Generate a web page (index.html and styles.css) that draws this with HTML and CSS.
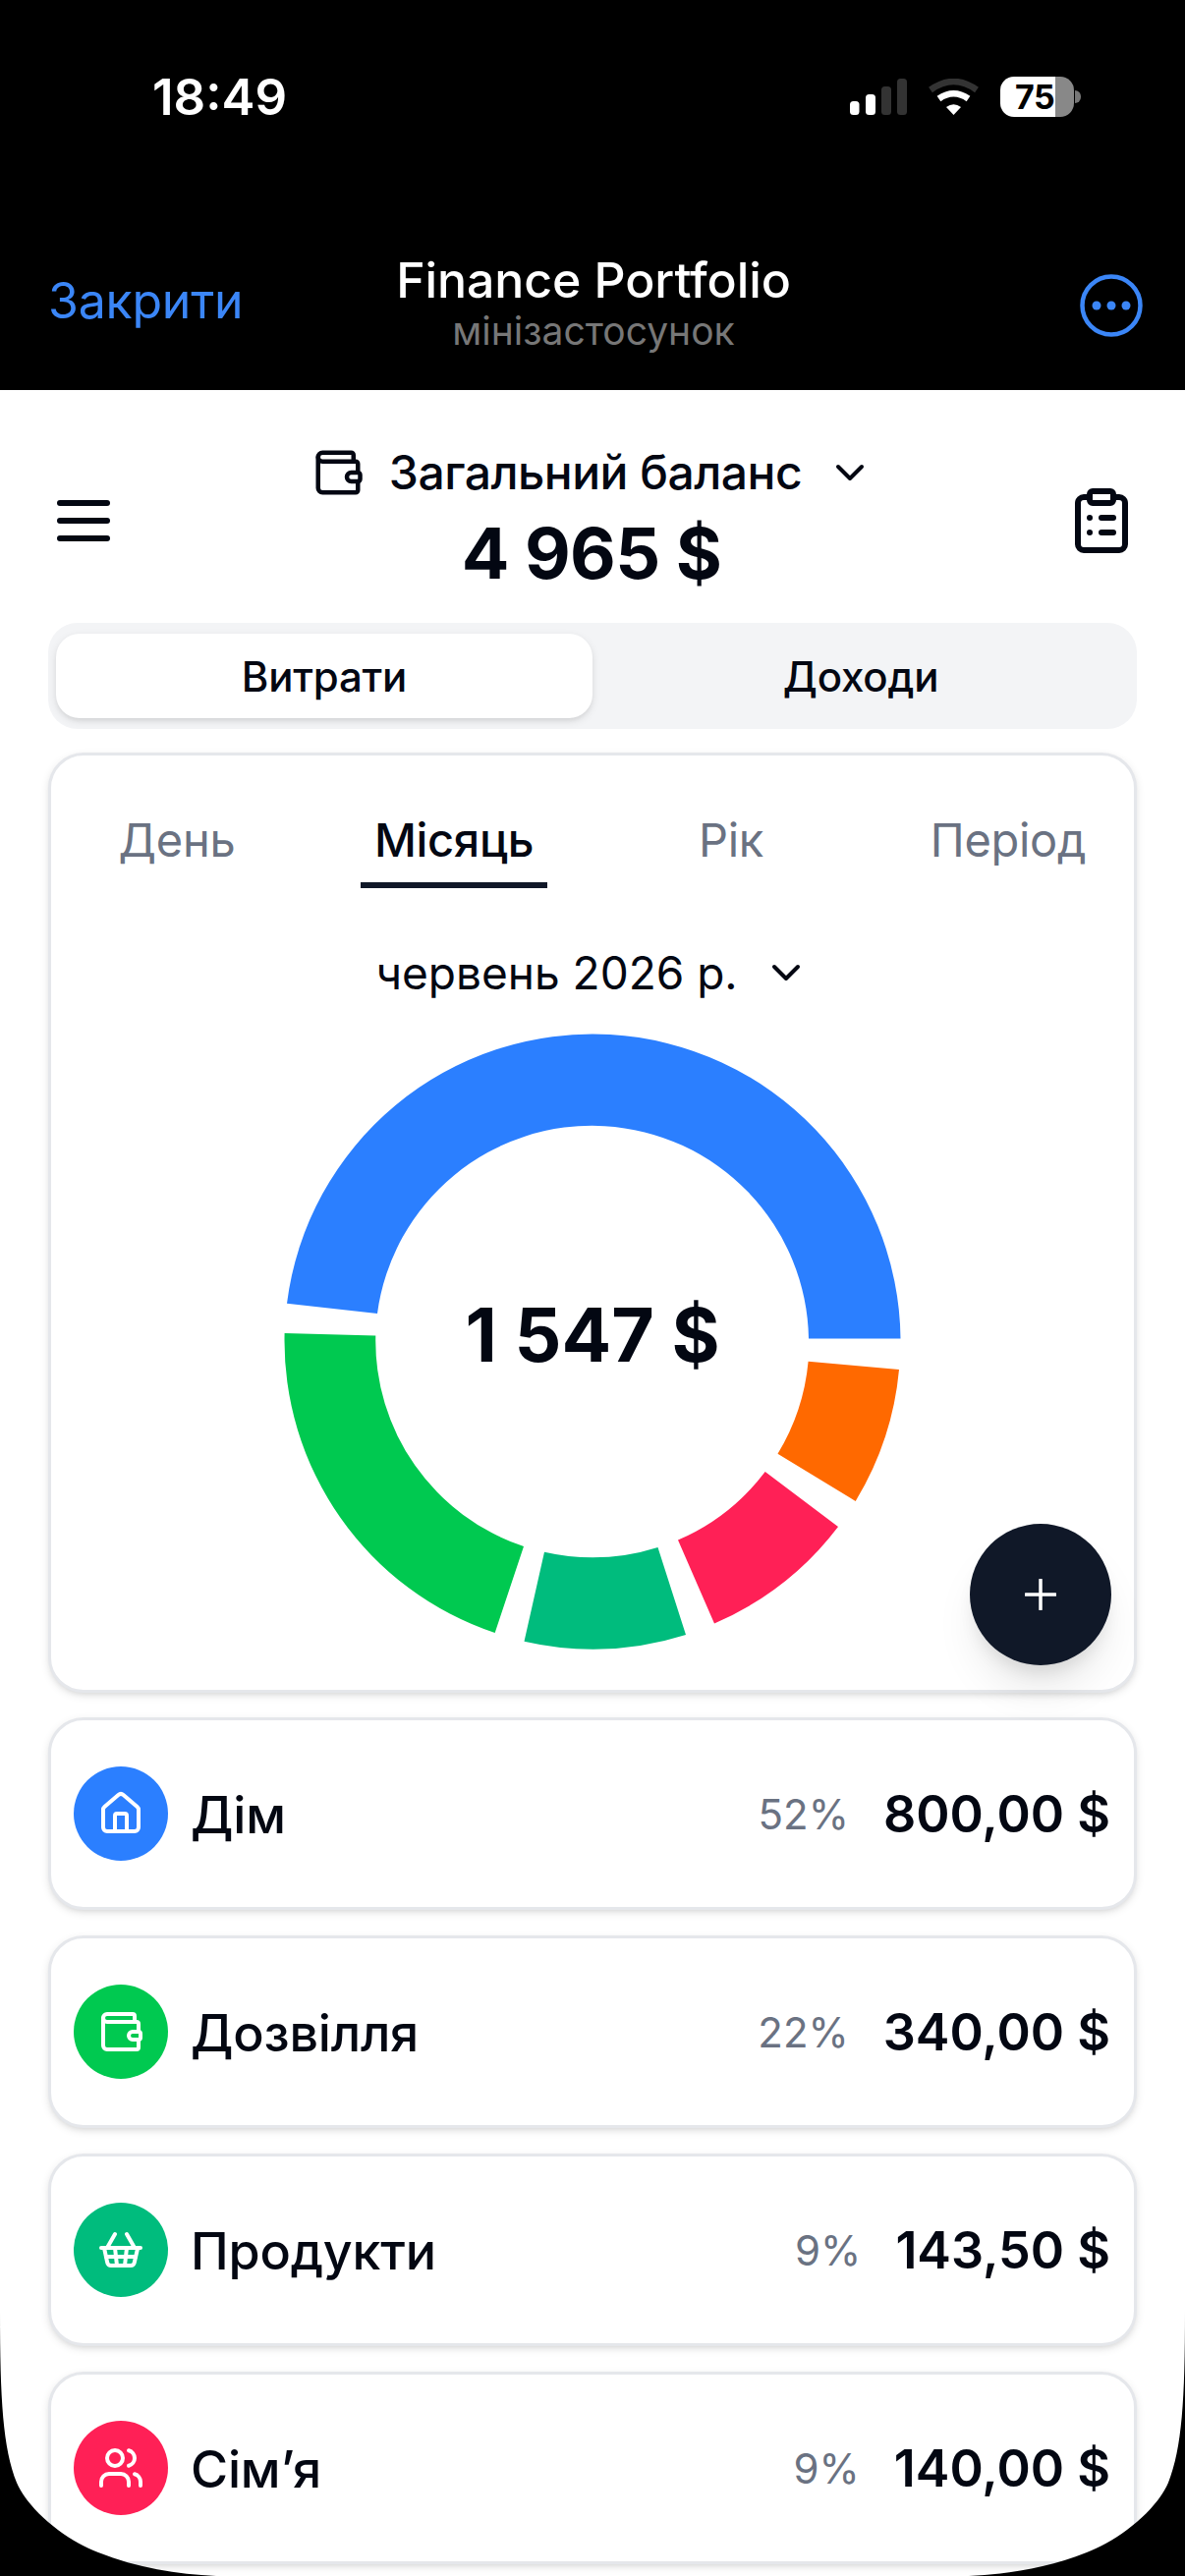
FILE: index.html
```html
<!DOCTYPE html>
<html lang="uk">
<head>
<meta charset="utf-8">
<title>Finance Portfolio</title>
<link rel="stylesheet" href="styles.css">
</head>
<body>
<div class="phone">
  <header class="top">
    <div class="status">
      <span class="time">18:49</span>
      <div class="status-icons">
        <svg class="signal" viewBox="0 0 58 37" width="58" height="37">
          <rect class="on" x="0" y="23" width="9.5" height="14" rx="3.5"/>
          <rect class="on" x="16" y="16" width="10" height="21" rx="3.5"/>
          <rect class="off" x="32" y="8" width="10" height="29" rx="3.5"/>
          <rect class="off" x="48" y="0" width="10" height="37" rx="3.5"/>
        </svg>
        <svg class="wifi" viewBox="0 0 51 37" width="51" height="37">
          <path class="wifi-off" d="M2 11.5Q25.5 -5.5 49 11.5"/>
          <path class="wifi-on" d="M10.5 20.5Q25.5 10 40.5 20.5"/>
          <path class="wifi-dot" d="M25.5 37L18 29Q25.5 23.5 33 29Z"/>
        </svg>
        <div class="battery"><span class="battery-num">75</span></div>
      </div>
    </div>
    <nav class="nav">
      <span class="close">Закрити</span>
      <div class="title-block">
        <div class="title">Finance Portfolio</div>
        <div class="subtitle">мінізастосунок</div>
      </div>
      <svg class="more" viewBox="0 0 64 64" width="64" height="64">
        <circle class="more-ring" cx="32" cy="32" r="29.5"/>
        <circle class="more-dot" cx="17" cy="32" r="4.5"/>
        <circle class="more-dot" cx="32" cy="32" r="4.5"/>
        <circle class="more-dot" cx="47" cy="32" r="4.5"/>
      </svg>
    </nav>
  </header>

  <main class="main">
    <section class="head">
      <svg class="ic ic72" viewBox="0 0 24 24"><path d="M4 12h16"/><path d="M4 18h16"/><path d="M4 6h16"/></svg>
      <div class="balance">
        <div class="balance-row">
          <svg class="ic ic54" viewBox="0 0 24 24"><path d="M19 7V4a1 1 0 0 0-1-1H5a2 2 0 0 0 0 4h15a1 1 0 0 1 1 1v4h-3a2 2 0 0 0 0 4h3a1 1 0 0 0 1-1v-2a1 1 0 0 0-1-1"/><path d="M3 5v14a2 2 0 0 0 2 2h15a1 1 0 0 0 1-1v-4"/></svg>
          <span class="balance-label">Загальний баланс</span>
          <svg class="ic ic48" viewBox="0 0 24 24"><path d="m6 9 6 6 6-6"/></svg>
        </div>
        <div class="balance-total">4 965 $</div>
      </div>
      <svg class="ic ic72" viewBox="0 0 24 24"><rect x="8" y="2" width="8" height="4" rx="1"/><path d="M16 4h2a2 2 0 0 1 2 2v14a2 2 0 0 1-2 2H6a2 2 0 0 1-2-2V6a2 2 0 0 1 2-2h2"/><path d="M12 11h4"/><path d="M12 16h4"/><path d="M8 11h.01"/><path d="M8 16h.01"/></svg>
    </section>

    <div class="toggle">
      <div class="toggle-item active">Витрати</div>
      <div class="toggle-item">Доходи</div>
    </div>

    <section class="card chart-card">
      <div class="tabs">
        <div class="tab-cell"><span class="tab">День</span></div>
        <div class="tab-cell"><span class="tab selected">Місяць</span></div>
        <div class="tab-cell"><span class="tab">Рік</span></div>
        <div class="tab-cell"><span class="tab">Період</span></div>
      </div>
      <div class="date-row">
        <span>червень 2026 р.</span>
        <svg class="ic ic48" viewBox="0 0 24 24"><path d="m6 9 6 6 6-6"/></svg>
      </div>
      <div class="donut">
        <svg viewBox="0 0 640 640" width="640" height="640">
          <path class="seg-blue" d="M633.5 317.5A313.5 313.5 0 0 0 9 281.7L101 291.9A220.5 220.5 0 0 1 540 317.5Z"/>
          <path class="seg-green" d="M6.6 312A313.5 313.5 0 0 0 220.7 617L250 529A220.5 220.5 0 0 1 99.3 314.6Z"/>
          <path class="seg-teal" d="M250.5 625.8A313.5 313.5 0 0 0 415 619L386.5 529.9A220.5 220.5 0 0 1 271 534.7Z"/>
          <path class="seg-pink" d="M444 607.4A313.5 313.5 0 0 0 570 509L495.7 453A220.5 220.5 0 0 1 407 522.6Z"/>
          <path class="seg-orange" d="M587.7 482.9A313.5 313.5 0 0 0 632 349L539.6 340.8A220.5 220.5 0 0 1 508.5 434.8Z"/>
        </svg>
        <div class="donut-label">1 547 $</div>
      </div>
      <button class="fab" type="button">
        <svg viewBox="0 0 32 32" width="32" height="32"><path d="M16 1v30M1 16h30"/></svg>
      </button>
    </section>

    <section class="card row">
      <span class="dot bg-blue"><svg class="ic ic48" viewBox="0 0 24 24"><path d="M15 21v-8a1 1 0 0 0-1-1h-4a1 1 0 0 0-1 1v8"/><path d="M3 10a2 2 0 0 1 .709-1.528l7-5.999a2 2 0 0 1 2.582 0l7 5.999A2 2 0 0 1 21 10v9a2 2 0 0 1-2 2H5a2 2 0 0 1-2-2z"/></svg></span>
      <span class="name">Дім</span>
      <span class="pct">52%</span>
      <span class="amount">800,00 $</span>
    </section>
    <section class="card row">
      <span class="dot bg-green"><svg class="ic ic48" viewBox="0 0 24 24"><path d="M19 7V4a1 1 0 0 0-1-1H5a2 2 0 0 0 0 4h15a1 1 0 0 1 1 1v4h-3a2 2 0 0 0 0 4h3a1 1 0 0 0 1-1v-2a1 1 0 0 0-1-1"/><path d="M3 5v14a2 2 0 0 0 2 2h15a1 1 0 0 0 1-1v-4"/></svg></span>
      <span class="name">Дозвілля</span>
      <span class="pct">22%</span>
      <span class="amount">340,00 $</span>
    </section>
    <section class="card row">
      <span class="dot bg-teal"><svg class="ic ic48" viewBox="0 0 24 24"><path d="m15 11-1 9"/><path d="m19 11-4-7"/><path d="M2 11h20"/><path d="m3.5 11 1.6 7.4a2 2 0 0 0 2 1.6h9.8a2 2 0 0 0 2-1.6l1.7-7.4"/><path d="M4.5 15.5h15"/><path d="m5 11 4-7"/><path d="m9 11 1 9"/></svg></span>
      <span class="name">Продукти</span>
      <span class="pct">9%</span>
      <span class="amount">143,50 $</span>
    </section>
    <section class="card row">
      <span class="dot bg-pink"><svg class="ic ic48" viewBox="0 0 24 24"><path d="M16 21v-2a4 4 0 0 0-4-4H6a4 4 0 0 0-4 4v2"/><path d="M16 3.128a4 4 0 0 1 0 7.744"/><path d="M22 21v-2a4 4 0 0 0-3-3.87"/><circle cx="9" cy="7" r="4"/></svg></span>
      <span class="name">Сім’я</span>
      <span class="pct">9%</span>
      <span class="amount">140,00 $</span>
    </section>
  </main>

  <svg class="corner corner-left" viewBox="0 0 220 270" width="220" height="270"><path d="M0 0C0 90 3 140 17 175C30 205 70 235 100 246C140 262 180 268 220 270L0 270Z"/></svg>
  <svg class="corner corner-right" viewBox="0 0 220 270" width="220" height="270"><path d="M0 0C0 90 3 140 17 175C30 205 70 235 100 246C140 262 180 268 220 270L0 270Z"/></svg>
</div>
</body>
</html>
```

FILE: styles.css
```css
* { box-sizing: border-box; }
html, body { margin: 0; padding: 0; background: #000; }
body { font-family: Inter, "Noto Sans", sans-serif; color: #030712; }

.phone { position: relative; width: 1206px; height: 2622px; overflow: hidden; background: #fff; }

/* top black chrome */
.top { height: 397px; background: #000; }
.status { height: 196px; display: flex; align-items: center; justify-content: space-between; padding: 0 113px 0 155px; }
.time { font-size: 51px; font-weight: 600; color: #fff; }
.status-icons { display: flex; align-items: center; gap: 22px; }
.signal .on { fill: #fff; }
.signal .off { fill: #333; }
.wifi-off { fill: none; stroke: #333; stroke-width: 6.5; }
.wifi-on { fill: none; stroke: #fff; stroke-width: 6.5; }
.wifi-dot { fill: #fff; }
.battery { position: relative; width: 75px; height: 41px; border-radius: 14px; background: linear-gradient(90deg, #fff 0 56px, #888 56px 75px); display: flex; align-items: center; padding-left: 15px; }
.battery::after { content: ""; position: absolute; left: 76px; top: 14px; width: 6px; height: 13px; border-radius: 0 6px 6px 0; background: #777; }
.battery-num { font-size: 34px; font-weight: 700; line-height: 41px; color: #000; letter-spacing: -0.5px; }

.nav { display: grid; grid-template-columns: 1fr auto 1fr; align-items: center; padding: 59px 47px 0 49px; }
.close { font-size: 50px; color: #3b86f7; line-height: 60px; padding-bottom: 5px; letter-spacing: -0.2px; }
.title-block { text-align: center; }
.title { font-size: 50px; font-weight: 500; line-height: 60px; color: #fff; letter-spacing: -0.1px; }
.subtitle { font-size: 39px; line-height: 48px; margin-top: -2px; color: #777; }
.more { justify-self: end; margin: 5px -4px 0 0; }
.more-ring { fill: none; stroke: #3b86f7; stroke-width: 4.5; }
.more-dot { fill: #3b86f7; }

/* generic icons */
.ic { display: block; flex: none; fill: none; stroke: currentColor; stroke-width: 2; stroke-linecap: round; stroke-linejoin: round; }
.ic72 { width: 72px; height: 72px; }
.ic54 { width: 54px; height: 54px; }
.ic48 { width: 48px; height: 48px; }

/* main */
.main { padding: 54px 49px 0; display: flex; flex-direction: column; }
.head { display: flex; align-items: center; justify-content: space-between; margin-bottom: 26px; }
.balance { display: flex; flex-direction: column; align-items: center; }
.balance-row { display: flex; align-items: center; gap: 25px; height: 60px; }
.balance-label { font-size: 48px; font-weight: 500; line-height: 60px; letter-spacing: -0.5px; }
.balance-total { font-size: 72px; font-weight: 700; line-height: 90px; margin: 7px 2px 0 0; letter-spacing: -0.7px; }

.toggle { display: grid; grid-template-columns: 1fr 1fr; height: 108px; padding: 11px 8px; background: #f3f4f6; border-radius: 30px; margin-bottom: 24px; }
.toggle-item { display: flex; align-items: center; justify-content: center; font-size: 42px; font-weight: 500; border-radius: 24px; letter-spacing: -0.2px; }
.toggle-item.active { background: #fff; box-shadow: 0 3px 9px rgba(0,0,0,.1), 0 3px 6px -3px rgba(0,0,0,.1); }

.card { background: #fff; border: 3px solid #e5e7eb; border-radius: 36px; box-shadow: 0 3px 9px rgba(0,0,0,.1), 0 3px 6px -3px rgba(0,0,0,.1); }

.chart-card { position: relative; height: 957px; padding-top: 56px; margin-bottom: 25px; }
.tabs { display: grid; grid-template-columns: repeat(4, 282px); margin: 0 -13px; }
.tab-cell { display: flex; justify-content: center; }
.tab { display: block; font-size: 47px; line-height: 60px; padding: 0 14px 13px; border-bottom: 6px solid transparent; color: #6a7282; letter-spacing: -0.3px; }
.tab.selected { color: #030712; font-weight: 500; border-bottom-color: #101828; }

.date-row { display: flex; align-items: center; justify-content: center; gap: 25px; height: 60px; margin-top: 56px; font-size: 46px; }
.donut { position: relative; width: 640px; height: 640px; margin: 25px auto 0; }
.donut svg { display: block; }
.seg-blue { fill: #2b7fff; }
.seg-green { fill: #00c950; }
.seg-teal { fill: #00bc7d; }
.seg-pink { fill: #ff2056; }
.seg-orange { fill: #ff6900; }
.donut-label { position: absolute; inset: 0 0 14px 0; display: flex; align-items: center; justify-content: center; font-size: 75px; font-weight: 700; }

.fab { position: absolute; right: 23px; bottom: 25px; width: 144px; height: 144px; padding: 0; border: 0; border-radius: 50%; background: #101828; display: flex; align-items: center; justify-content: center; box-shadow: 0 30px 45px -9px rgba(0,0,0,.1), 0 12px 18px -6px rgba(0,0,0,.1); }
.fab svg { display: block; fill: none; stroke: #fff; stroke-width: 3.5; stroke-linecap: round; }

.row { display: flex; align-items: center; height: 196px; padding: 0 24px 0 23px; margin-bottom: 26px; }
.dot { width: 96px; height: 96px; border-radius: 50%; display: flex; align-items: center; justify-content: center; color: #fff; flex: none; }
.bg-blue { background: #2b7fff; }
.bg-green { background: #00c950; }
.bg-teal { background: #00bc7d; }
.bg-pink { background: #ff2056; }
.name { font-size: 52px; font-weight: 500; margin-left: 23px; flex: 1; position: relative; top: 1px; letter-spacing: -0.2px; }
.pct { font-size: 42px; color: #6a7282; margin-right: 35px; }
.amount { font-size: 52px; font-weight: 600; }

/* phone screen corners */
.corner { position: absolute; bottom: 0; display: block; }
.corner path { fill: #000; }
.corner-left { left: 0; }
.corner-right { right: 0; transform: scaleX(-1); }
```
